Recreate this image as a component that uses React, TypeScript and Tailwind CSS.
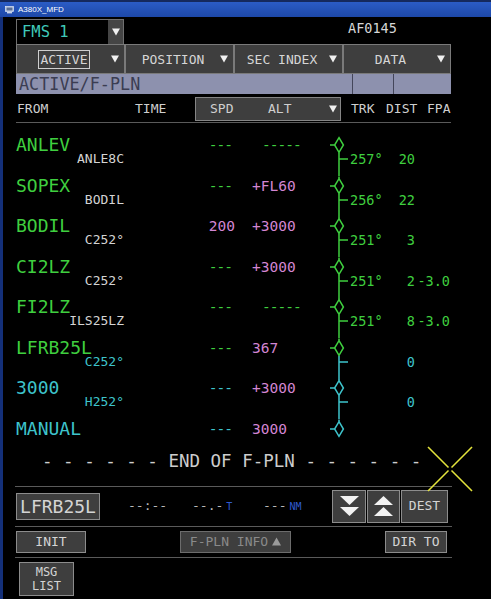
import React from "react";

const GREEN = "#3fcf3f";
const CYAN = "#3ec4cc";

type Wp = {
  id: string;
  idC: string;
  sub?: string;
  subC?: string;
  spd: string;
  spdC: string;
  alt: string;
  altC: string;
  altDash?: boolean;
  trk?: string;
  dist?: string;
  fpa?: string;
  legC?: string;
  above: string;
  dia: string;
  below: string;
  first?: boolean;
  last?: boolean;
};

const G = "text-[#3fcf3f]";
const C = "text-[#3ec4cc]";
const M = "text-[#d386d3]";
const W = "text-[#d4d4d4]";

const wps: Wp[] = [
  { id: "ANLEV", idC: G, sub: "ANLE8C", subC: W, spd: "---", spdC: G, alt: "-----", altC: G, altDash: true, trk: "257°", dist: "20", legC: G, above: GREEN, dia: GREEN, below: GREEN, first: true },
  { id: "SOPEX", idC: G, sub: "BODIL", subC: W, spd: "---", spdC: G, alt: "+FL60", altC: M, trk: "256°", dist: "22", legC: G, above: GREEN, dia: GREEN, below: GREEN },
  { id: "BODIL", idC: G, sub: "C252°", subC: W, spd: "200", spdC: M, alt: "+3000", altC: M, trk: "251°", dist: "3", legC: G, above: GREEN, dia: GREEN, below: GREEN },
  { id: "CI2LZ", idC: G, sub: "C252°", subC: W, spd: "---", spdC: G, alt: "+3000", altC: M, trk: "251°", dist: "2", fpa: "-3.0", legC: G, above: GREEN, dia: GREEN, below: GREEN },
  { id: "FI2LZ", idC: G, sub: "ILS25LZ", subC: W, spd: "---", spdC: G, alt: "-----", altC: G, altDash: true, trk: "251°", dist: "8", fpa: "-3.0", legC: G, above: GREEN, dia: GREEN, below: GREEN },
  { id: "LFRB25L", idC: G, sub: "C252°", subC: C, spd: "---", spdC: G, alt: "367", altC: M, dist: "0", legC: C, above: GREEN, dia: GREEN, below: CYAN },
  { id: "3000", idC: C, sub: "H252°", subC: C, spd: "---", spdC: C, alt: "+3000", altC: M, dist: "0", legC: C, above: CYAN, dia: CYAN, below: CYAN },
  { id: "MANUAL", idC: C, spd: "---", spdC: C, alt: "3000", altC: M, above: CYAN, dia: CYAN, below: CYAN, last: true },
];

function Graph({ w }: { w: Wp }) {
  const h = w.last ? 18 : 40.5;
  return (
    <svg width="25" height={h} viewBox={`0 0 25 ${h}`} className="block">
      {!w.first && <line x1="14" y1="0" x2="14" y2="1.6" stroke={w.above} strokeWidth="1.5" />}
      {!w.last && <line x1="14" y1="16.4" x2="14" y2={h} stroke={w.below} strokeWidth="1.5" />}
      {!w.last && <line x1="14" y1="23" x2="23" y2="23" stroke={w.below} strokeWidth="1.5" />}
      <line x1="5" y1="9" x2="9.5" y2="9" stroke={w.dia} strokeWidth="1.5" />
      <polygon points="14,1.6 18.4,9 14,16.4 9.6,9" fill="#000" stroke={w.dia} strokeWidth="1.5" />
    </svg>
  );
}

function Tri({ up, size = 8, color = "#f0f0f0" }: { up?: boolean; size?: number; color?: string }) {
  return (
    <svg width={size} height={size} viewBox="0 0 8 8" className="block">
      {up ? <polygon points="0,7.5 8,7.5 4,0.5" fill={color} /> : <polygon points="0,0.5 8,0.5 4,7.5" fill={color} />}
    </svg>
  );
}

function Block({ w }: { w: Wp }) {
  const spdDash = w.spd.startsWith("-");
  return (
    <div
      className={
        "grid grid-cols-[108px_111px_90px_25px_40px_25px_35px] " +
        (w.last ? "grid-rows-[18px]" : "grid-rows-[18px_10px_12.5px]")
      }
    >
      <div className={"col-start-1 row-start-1 text-[18px] leading-[18px] whitespace-nowrap " + w.idC}>{w.id}</div>
      <div
        className={
          "col-start-2 row-start-1 text-right text-[14.5px] leading-[18px] " +
          (spdDash ? "tracking-[-1px] pr-[3px] " : "") +
          w.spdC
        }
      >
        {w.spd}
      </div>
      <div
        className={
          "col-start-3 row-start-1 text-[14.5px] leading-[18px] whitespace-nowrap " +
          (w.altDash ? "pl-[27px] tracking-[-1px] " : "pl-[17px] ") +
          w.altC
        }
      >
        {w.alt}
      </div>
      <div className={"col-start-4 row-start-1 " + (w.last ? "row-span-1" : "row-span-3")}>
        <Graph w={w} />
      </div>
      {w.sub && (
        <div className={"col-start-1 row-start-2 text-right text-[13px] leading-[10px] whitespace-nowrap " + w.subC}>
          {w.sub}
        </div>
      )}
      {w.trk && (
        <div className={"col-start-5 row-start-2 text-[13.5px] leading-[10px] whitespace-nowrap " + w.legC}>{w.trk}</div>
      )}
      {w.dist && (
        <div className={"col-start-6 row-start-2 text-right text-[13.5px] leading-[10px] " + w.legC}>{w.dist}</div>
      )}
      {w.fpa && (
        <div className={"col-start-7 row-start-2 text-right text-[13.5px] leading-[10px] " + w.legC}>{w.fpa}</div>
      )}
    </div>
  );
}

function Tab({ label, w, boxed }: { label: string; w: string; boxed?: boolean }) {
  return (
    <div className={"h-[30px] flex items-center bg-[#3e3e3e] border border-[#7a7a7a] " + w}>
      <div className="flex-1 flex justify-center text-[13px] text-[#d6d6d6]">
        {boxed ? (
          <span className="border border-[#cfcfcf] px-[2px] leading-[17px]">{label}</span>
        ) : (
          <span className="leading-[17px] whitespace-pre">{label}</span>
        )}
      </div>
      <div className="mr-[5px]">
        <Tri />
      </div>
    </div>
  );
}

export default function App() {
  return (
    <div className="relative w-[491px] h-[599px] overflow-hidden bg-black font-['DejaVu_Sans_Mono',monospace] flex flex-col">
      {/* title bar */}
      <div className="h-[17px] shrink-0 flex items-center gap-[4px] pl-[5px] border-t-2 border-[#15295e] bg-[linear-gradient(#2b5cc6,#1d48a8)]">
        <svg width="9" height="8" viewBox="0 0 9 8" className="block">
          <rect x="0.5" y="0.5" width="8" height="5" fill="#c9d3e6" stroke="#e8eef8" strokeWidth="0.6" />
          <rect x="1.5" y="1.5" width="6" height="3" fill="#5a6f96" />
          <rect x="2" y="6" width="5" height="1.4" fill="#c9d3e6" />
        </svg>
        <span className="text-[8px] leading-[8px] text-white font-['Liberation_Sans',sans-serif]">A380X_MFD</span>
      </div>

      <div className="flex flex-1">
        <div className="w-[3px] bg-[#14307a]" />
        <div className="flex flex-col pl-[13px] w-[448px]">
          {/* FMS row */}
          <div className="h-[27px] pt-[2px] flex items-start">
            <div className="w-[108px] h-[25px] flex border border-b-0 border-[#707070] bg-black">
              <div className="flex-1 pl-[5px] text-[15.5px] leading-[24px] text-[#3fc9b9]">FMS 1</div>
              <div className="w-[15px] bg-[#454545] flex items-center justify-center">
                <Tri />
              </div>
            </div>
            <div className="ml-[224px] text-[13.5px] leading-[18px] text-[#d6d6d6]">AF0145</div>
          </div>

          {/* tabs */}
          <div className="flex w-[435px]">
            <Tab label="ACTIVE" w="w-[109px]" boxed />
            <Tab label="POSITION" w="w-[109px]" />
            <Tab label="SEC INDEX" w="w-[109px]" />
            <Tab label="DATA" w="w-[108px]" />
          </div>

          {/* ACTIVE/F-PLN bar */}
          <div className="h-[20px] w-[435px] flex bg-[#8d91ae]">
            <div className="w-[336px] pl-[3px] text-[16.8px] leading-[20px] text-[#3b3d52]">ACTIVE/F-PLN</div>
            <div className="w-px bg-[#44465a]" />
            <div className="w-[40px]" />
            <div className="w-px bg-[#44465a]" />
            <div className="flex-1" />
          </div>

          {/* header */}
          <div className="mt-[3px] h-[24px] w-[435px] flex items-center text-[13px] text-[#cfcfcf]">
            <div className="w-[119px] pl-[1px]">FROM</div>
            <div className="w-[60px]">TIME</div>
            <div className="w-[146px] h-[24px] flex items-center bg-[#3e3e3e] border border-[#858585]">
              <span className="w-[72px] pl-[14px]">SPD</span>
              <span className="flex-1">ALT</span>
              <span className="mr-[3px]">
                <Tri />
              </span>
            </div>
            <div className="w-[10px]" />
            <div className="w-[35px]">TRK</div>
            <div className="w-[41px]">DIST</div>
            <div>FPA</div>
          </div>
          <div className="mt-px h-px w-[435px] bg-[#5a5a5a]" />

          {/* flight plan */}
          <div className="mt-[13px] flex flex-col">
            {wps.map((w) => (
              <Block key={w.id} w={w} />
            ))}
          </div>

          {/* end of f-pln */}
          <div className="mt-[11.5px] h-[24px] pl-[26px] text-[17.5px] leading-[24px] text-[#cdcdcd] whitespace-pre">
            {"- - - - - - END OF F-PLN - - - - - -"}
          </div>

          <div className="mt-[12.5px] h-px w-[437px] -ml-px bg-[#5a5a5a]" />

          {/* bottom row 1 */}
          <div className="h-[39px] w-[435px] flex items-center">
            <div className="w-[84px] h-[27px] bg-[#3e3e3e] border border-[#8c8c8c] text-center text-[18px] leading-[25px] text-[#d4d4d4]">
              LFRB25L
            </div>
            <div className="ml-[28px] w-[64px] text-[13px] text-[#b8b8b8]">--:--</div>
            <div className="w-[71px] flex items-baseline text-[13px] text-[#b8b8b8]">
              <span>--.-</span>
              <span className="ml-[3px] text-[10px] text-[#2f5bd0]">T</span>
            </div>
            <div className="flex items-baseline text-[13px] text-[#b8b8b8]">
              <span>---</span>
              <span className="ml-[3px] text-[10px] text-[#2f5bd0]">NM</span>
            </div>
            <div className="flex-1" />
            <div className="flex gap-px mr-[3px]">
              <div className="w-[34px] h-[33px] bg-[#3e3e3e] border border-[#8c8c8c] flex items-center justify-center">
                <svg width="19" height="20" viewBox="0 0 19 20" className="block">
                  <polygon points="0,0 19,0 9.5,9" fill="#f2f2f2" />
                  <polygon points="0,11 19,11 9.5,20" fill="#f2f2f2" />
                </svg>
              </div>
              <div className="w-[33px] h-[33px] bg-[#3e3e3e] border border-[#8c8c8c] flex items-center justify-center">
                <svg width="19" height="20" viewBox="0 0 19 20" className="block">
                  <polygon points="9.5,0 19,9 0,9" fill="#f2f2f2" />
                  <polygon points="9.5,11 19,20 0,20" fill="#f2f2f2" />
                </svg>
              </div>
              <div className="w-[47px] h-[33px] bg-[#3e3e3e] border border-[#8c8c8c] flex items-center justify-center text-[13px] text-[#d4d4d4]">
                DEST
              </div>
            </div>
          </div>
          <div className="h-px w-[437px] -ml-px bg-[#5a5a5a]" />

          {/* bottom row 2 */}
          <div className="h-[30px] w-[435px] pt-[4px] flex items-start">
            <div className="w-[70px] h-[22px] bg-[#3e3e3e] border border-[#8c8c8c] text-center text-[13px] leading-[20px] text-[#d4d4d4]">
              INIT
            </div>
            <div className="ml-[94px] w-[111px] h-[22px] bg-[#3e3e3e] border border-[#6c6c6c] flex items-center justify-center gap-[4px] text-[13px] leading-[20px] text-[#8a8a8a]">
              <span>F-PLN INFO</span>
              <Tri up size={9} color="#9a9a9a" />
            </div>
            <div className="flex-1" />
            <div className="mr-[4px] w-[62px] h-[22px] bg-[#3e3e3e] border border-[#8c8c8c] text-center text-[13px] leading-[20px] text-[#d4d4d4]">
              DIR TO
            </div>
          </div>
          <div className="h-px w-[437px] -ml-px bg-[#5a5a5a]" />

          {/* MSG LIST */}
          <div className="mt-[4px] ml-[3px] w-[55px] h-[34px] bg-[#3e3e3e] border border-[#8c8c8c] flex flex-col items-center justify-center text-[12px] leading-[14px] text-[#d4d4d4]">
            <span>MSG</span>
            <span>LIST</span>
          </div>
        </div>
      </div>

      {/* yellow cross overlay */}
      <svg width="48" height="48" viewBox="0 0 48 48" className="absolute left-[426px] top-[445px] block">
        <line x1="2" y1="2" x2="22.5" y2="22.5" stroke="#e3e33c" strokeWidth="1.6" />
        <line x1="25.5" y1="25.5" x2="46" y2="46" stroke="#e3e33c" strokeWidth="1.6" />
        <line x1="46" y1="2" x2="25.5" y2="22.5" stroke="#e3e33c" strokeWidth="1.6" />
        <line x1="22.5" y1="25.5" x2="2" y2="46" stroke="#e3e33c" strokeWidth="1.6" />
      </svg>
    </div>
  );
}
